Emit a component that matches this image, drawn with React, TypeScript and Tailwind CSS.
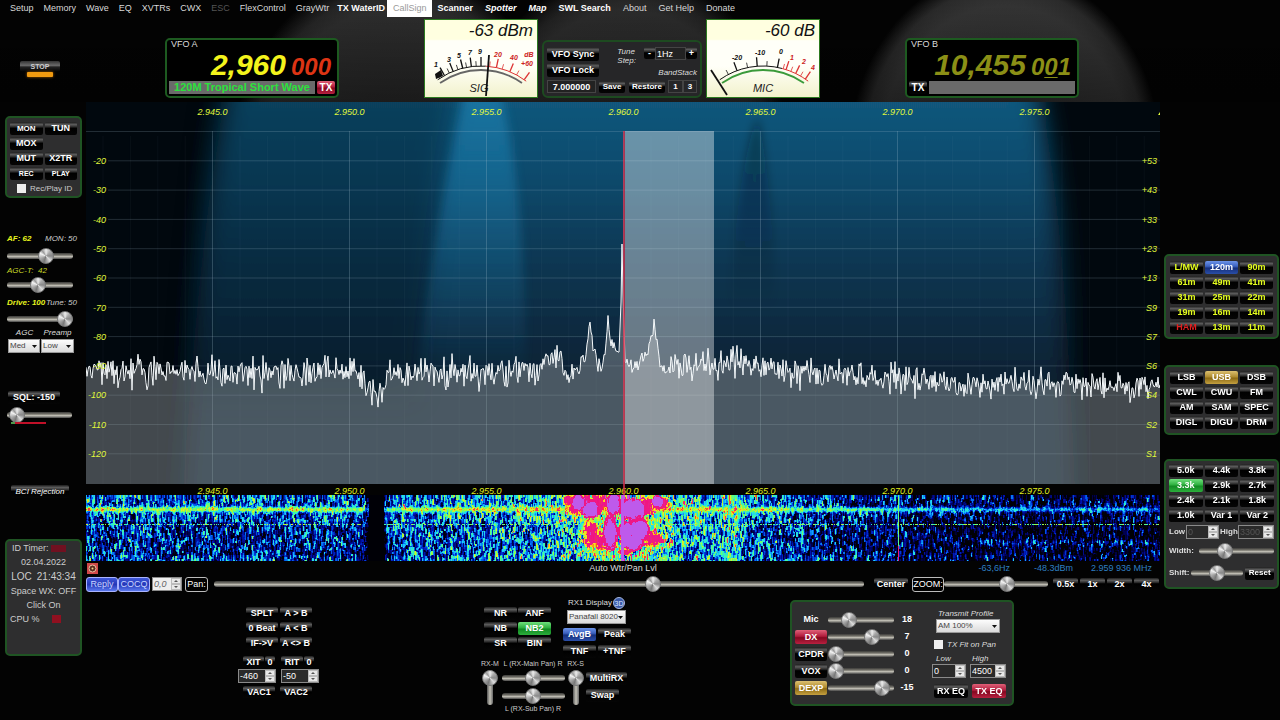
import { useLayoutEffect, useRef, type ReactNode } from "react";

const W = 1074;

function makeRandom(seed: number) {
  let s = seed;
  return () => {
    s = (s * 1664525 + 1013904223) % 4294967296;
    return s / 4294967296;
  };
}

function interpolate(points: number[][], x: number) {
  for (let i = 1; i < points.length; i++) {
    if (x <= points[i][0]) {
      const [x0, y0] = points[i - 1];
      const [x1, y1] = points[i];
      return y0 + ((y1 - y0) * (x - x0)) / (x1 - x0);
    }
  }
  return points[points.length - 1][1];
}

/* ---------- small controls ---------- */

const tones = {
  dark: "bg-[linear-gradient(#1c1c1c,#5c5c5c_20%,#2a2a2a_38%,#000_48%,#050505)] text-white",
  blue: "bg-[linear-gradient(#6d94e8,#3c62c0_40%,#16307c_55%,#2a4ea8)] text-white",
  green: "bg-[linear-gradient(#6fe07c,#2fb040_45%,#128a22_55%,#2cae3c)] text-white",
  gold: "bg-[linear-gradient(#dcc070,#b08c30_45%,#8c6a14_55%,#c4a040)] text-white",
  red: "bg-[linear-gradient(#e06078,#b01c3c_45%,#840820_55%,#b82040)] text-white",
  band: "bg-[linear-gradient(#1c1c1c,#5c5c5c_20%,#2a2a2a_38%,#000_48%,#050505)] text-[#e6ff1e]",
  ham: "bg-[linear-gradient(#1c1c1c,#5c5c5c_20%,#2a2a2a_38%,#000_48%,#050505)] text-[#e02020]",
};
type Tone = keyof typeof tones;

function Btn({ children, tone = "dark", className = "h-[13px]", size = "text-[9px] font-bold" }: { children: ReactNode; tone?: Tone; className?: string; size?: string }) {
  return (
    <button type="button" className={`flex items-center justify-center rounded-[2px] whitespace-nowrap leading-none ${size} ${tones[tone]} ${className}`}>
      {children}
    </button>
  );
}

function Slider({ label, value, className = "w-16", vertical = false }: { label: string; value: number; className?: string; vertical?: boolean }) {
  const track = vertical
    ? "w-4 [writing-mode:vertical-lr] [direction:rtl] [&::-webkit-slider-runnable-track]:w-[6px] [&::-webkit-slider-runnable-track]:bg-[linear-gradient(to_right,#555,#c4c2b8,#666)] [&::-webkit-slider-thumb]:-ml-[5px]"
    : "h-4 [&::-webkit-slider-runnable-track]:h-[6px] [&::-webkit-slider-runnable-track]:bg-[linear-gradient(#3a3a38,#76746c_35%,#c2c0b6_60%,#444)] [&::-webkit-slider-thumb]:-mt-[5px]";
  return (
    <input
      type="range"
      aria-label={label}
      defaultValue={value}
      className={`block shrink-0 appearance-none bg-transparent [&::-webkit-slider-runnable-track]:rounded-[3px] [&::-webkit-slider-thumb]:h-4 [&::-webkit-slider-thumb]:w-4 [&::-webkit-slider-thumb]:appearance-none [&::-webkit-slider-thumb]:rounded-full [&::-webkit-slider-thumb]:border [&::-webkit-slider-thumb]:border-[#777] [&::-webkit-slider-thumb]:bg-[conic-gradient(#eee,#aaa_12%,#888_25%,#ddd_38%,#777_55%,#a8a8a8_68%,#f4f4f4_82%,#999_90%,#eee)] ${track} ${className}`}
    />
  );
}

function Drop({ label, value, className }: { label: string; value: string; className: string }) {
  return (
    <span className={`grid items-center bg-[linear-gradient(#fff,#d8d8d8)] ${className}`}>
      <select aria-label={label} className="col-start-1 row-start-1 h-[14px] w-full appearance-none border border-[#999] pl-px text-[8px] leading-none text-[#444] not-italic">
        <option>{value}</option>
      </select>
      <svg className="pointer-events-none col-start-1 row-start-1 mr-[3px] h-[3px] w-[5px] justify-self-end" viewBox="0 0 5 3">
        <path d="M0 0h5L2.500 3z" fill="#111" />
      </svg>
    </span>
  );
}

function Spin({ label, value, className, light = false, dim = false }: { label: string; value: string; className: string; light?: boolean; dim?: boolean }) {
  return (
    <span className={`flex h-[14px] border border-[#8a8a8a] ${light ? "bg-[#eee]" : "bg-[#2a2a2a]"} ${className}`}>
      <input aria-label={label} defaultValue={value} className={`w-0 min-w-0 flex-1 bg-transparent pl-px text-[9px] leading-none ${light ? "text-[#666] italic" : dim ? "text-[#555]" : "text-white not-italic"}`} />
      <span className="flex w-[10px] flex-col bg-[#e8e8e8]">
        {["up", "down"].map((d) => (
          <button key={d} type="button" aria-label={`${label} ${d}`} className="flex flex-1 items-center justify-center border border-[#bbb]">
            <svg viewBox="0 0 4 2" className="h-[2px] w-[4px]">
              <path d={d === "up" ? "M0 2h4L2 0z" : "M0 0h4L2 2z"} fill="#555" />
            </svg>
          </button>
        ))}
      </span>
    </span>
  );
}

const panel = "rounded-[5px] border-2 border-[#1f5423] bg-[#2e2e2f]";

/* ---------- header ---------- */

const plain = "px-[5px] text-[#d8d8d8]";
const strong = "px-[5px] font-bold text-white";
const menu: [string, string][] = [
  ["Setup", plain], ["Memory", plain], ["Wave", plain], ["EQ", plain], ["XVTRs", plain], ["CWX", plain], ["ESC", "px-[5px] text-[#555]"],
  ["FlexControl", plain], ["GrayWtr", plain], ["TX WaterID", "pl-[3px] pr-[2px] font-bold text-white"], ["CallSign", "bg-white px-[6px] text-[#999]"],
  ["Scanner", strong], ["Spotter", "pl-[7px] pr-[6px] font-bold italic text-white"], ["Map", "px-[6px] font-bold italic text-white"],
  ["SWL Search", "px-[6px] font-bold text-white"], ["About", "px-[6px] text-[#d8d8d8]"], ["Get Help", "px-[6px] text-[#d8d8d8]"], ["Donate", "px-[6px] text-[#d8d8d8]"],
];

function Vfo({ name, main, sub, active }: { name: string; main: string; sub: string; active: boolean }) {
  const tx = (
    <Btn tone={active ? "red" : "dark"} className="h-[13px] w-[18px] shrink-0" size="text-[10px] font-bold">
      TX
    </Btn>
  );
  return (
    <section className="flex h-[60px] w-[174px] flex-col rounded-[5px] border-2 border-[#1d5a20] bg-black px-[2px]">
      <h2 className="pl-[2px] text-[9px] leading-[8px] text-[#ddd]">{name}</h2>
      <div className={`flex h-[33px] items-baseline justify-end gap-[5px] pr-[4px] font-bold italic leading-[34px] ${active ? "text-[#f4f41c]" : "text-[#8b8f16]"}`}>
        <span className="text-[30px]">{main}</span>
        <span className={`text-[24px] ${active ? "text-[#dd3414]" : ""}`}>
          {active ? sub : (
            <>
              0<u className="decoration-1 underline-offset-2">0</u>1
            </>
          )}
        </span>
      </div>
      <div className="flex items-center gap-[2px]">
        {!active && tx}
        <span className="flex h-[13px] flex-1 items-center justify-center bg-[#6a6a6a] text-[11px] font-bold leading-none whitespace-nowrap text-[#2be23c]">
          {active ? "120M Tropical Short Wave" : ""}
        </span>
        {active && tx}
      </div>
    </section>
  );
}

const onDial = (x: number, r: number) => {
  const a = Math.asin((x - 57) / 78);
  return [57 + r * Math.sin(a), 122 - r * Math.cos(a)];
};
const arc = (xa: number, xb: number, r: number) => {
  const [x0, y0] = onDial(xa, r);
  const [x1, y1] = onDial(xb, r);
  return `M${x0} ${y0}A${r} ${r} 0 0 1 ${x1} ${y1}`;
};

function Meter({ value, name, split, needle, major, minor, labels, under }: { value: string; name: string; split: number; needle: number[]; major: number[]; minor: number[]; labels: [string, number, number][]; under: string }) {
  const tick = (x: number, length: number) => {
    const [x0, y0] = onDial(x, 75);
    const [x1, y1] = onDial(x, 75 + length);
    return <line key={x} x1={x0} y1={y0} x2={x1} y2={y1} stroke={x > split ? "#d33" : "#111"} strokeWidth={length > 6 ? 1.3 : 0.8} />;
  };
  return (
    <section className="h-[79px] w-[114px] border border-[#2c7a20] bg-[linear-gradient(#ffffe0_25%,#fffff8_27%,#fffff8_60%,#f2f2cc)]">
      <svg viewBox="1 1 112 77" className="block h-full w-full font-['Liberation_Sans',Arial,sans-serif] italic">
        <text x="109" y="17" textAnchor="end" fontSize="17" fill="#111">{value}</text>
        <path d={arc(12, split, 75)} fill="none" stroke="#111" strokeWidth="1" />
        <path d={arc(split, 104, 75)} fill="none" stroke="#d33" strokeWidth="1" />
        <path d={arc(12, 102, 71)} fill="none" stroke={under} strokeWidth="1.800" />
        {major.map((x) => tick(x, 9))}
        {minor.map((x) => tick(x, 5))}
        {labels.map(([t, x, y]) => (
          <text key={t} x={x} y={y} textAnchor="middle" fontSize="7" fontWeight="bold" fill={x > split + 3 ? "#c22" : "#111"}>{t}</text>
        ))}
        {name === "SIG" && <path d="M12 60l7-3-2-6-6 4z" fill="#111" />}
        <text x={name === "SIG" ? 55 : 57} y="73" textAnchor="middle" fontSize="11" fill="#222">{name}</text>
        <line x1={needle[0]} y1={needle[1]} x2={needle[2]} y2={needle[3]} stroke="#111" strokeWidth="1.800" />
      </svg>
    </section>
  );
}

function SyncPanel() {
  return (
    <section className="flex h-[58px] w-[160px] flex-col rounded-[6px] border-2 border-[#1d4a20] bg-[#262628] px-[3px] pt-[5px]">
      <div className="flex justify-between">
        <div className="flex flex-col gap-[2px]">
          <Btn className="h-[14px] w-[52px]">VFO Sync</Btn>
          <Btn className="h-[14px] w-[52px]">VFO Lock</Btn>
        </div>
        <div className="flex flex-col items-end gap-[2px]">
          <div className="flex items-start">
            <label htmlFor="step" className="mr-[8px] text-[8px] italic leading-[9px] text-[#ddd]">Tune<br />Step:</label>
            <Btn className="h-[12px] w-[11px]">-</Btn>
            <input id="step" defaultValue="1Hz" className="h-[13px] w-[31px] border border-[#444] bg-[#222] pl-px text-[9px] leading-none text-white" />
            <Btn className="h-[12px] w-[11px]">+</Btn>
          </div>
          <span className="text-[8px] italic leading-[12px] text-[#ddd]">BandStack</span>
        </div>
      </div>
      <div className="mt-px flex items-center">
        <input aria-label="Stored frequency" defaultValue="7.000000" className="h-[13px] w-[49px] border border-[#444] bg-[#222] text-center text-[9px] font-bold leading-none text-white" />
        <Btn className="ml-[3px] h-[12px] w-[26px]" size="text-[8px] font-bold">Save</Btn>
        <Btn className="ml-[4px] h-[12px] w-[36px]" size="text-[8px] font-bold">Restore</Btn>
        <span className="ml-auto flex h-[13px] w-[15px] items-center justify-center border border-[#444] text-[8px] font-bold text-white">1</span>
        <span className="flex h-[13px] w-[14px] items-center justify-center border border-[#444] text-[8px] font-bold text-white">3</span>
      </div>
    </section>
  );
}

function Header() {
  return (
    <header className="bg-[linear-gradient(rgba(0,0,0,0),rgba(0,0,0,0.35)_100px),radial-gradient(ellipse_155px_180px_at_78.500%_150px,#2a2a2a,#343434_80%,#2a2a2a_90%,transparent),radial-gradient(ellipse_165px_200px_at_49%_170px,#262626,#2c2c2c_80%,#222_88%,transparent),radial-gradient(ellipse_165px_190px_at_31%_160px,#262626,#2e2e2e_80%,#262626_88%,transparent)]">
      <nav className="flex h-[18px] items-start pl-[5px]">
        {menu.map(([t, c]) => (
          <a key={t} href="#" className={`text-[9px] leading-[17px] whitespace-nowrap ${c}`}>{t}</a>
        ))}
      </nav>
      <div className="flex h-[84px] items-end pb-[4px]">
        <div className="flex w-[86px] shrink-0 pb-[21px] pl-[20px]">
          <button type="button" className="flex w-[40px] flex-col items-center text-[7px] leading-[11px] font-bold text-[#ccc]">
            <span className="w-full rounded-[2px] bg-[linear-gradient(#333,#6a6a6a_40%,#222_55%,#000)]">STOP</span>
            <span className="h-[5px] w-[26px] rounded-[1px] bg-[#f09a10] shadow-[0_0_3px_#a86000]" />
          </button>
        </div>
        <div className="flex flex-1 items-end justify-between pr-[81px] pl-[79px]">
          <Vfo name="VFO A" main="2,960" sub="000" active />
          <div className="flex items-end gap-[4px]">
            <Meter value="-63 dBm" name="SIG" split={62} under="#666" needle={[65, 36, 62, 77]}
              major={[19, 28, 38, 47, 57, 73, 87, 102]} minor={[14, 24, 33, 42, 52, 66, 79, 94]}
              labels={[["1", 12, 48], ["3", 25, 43], ["5", 35, 39], ["7", 46, 36], ["9", 56, 35], ["20", 74, 38], ["40", 90, 41], ["dB", 105, 38], ["+60", 103, 47]]} />
            <SyncPanel />
            <Meter value="-60 dB" name="MIC" split={77} under="#3a9a3a" needle={[5, 51, 21, 76]}
              major={[30, 51, 72, 81, 91, 101]} minor={[21, 41, 61, 78, 86, 96]}
              labels={[["-20", 31, 41], ["-10", 54, 36], ["0", 75, 35], ["1", 86, 41], ["2", 98, 45], ["4", 107, 51]]} />
          </div>
          <Vfo name="VFO B" main="10,455" sub="001" active={false} />
        </div>
        <div className="w-[120px] shrink-0" />
      </div>
    </header>
  );
}

/* ---------- spectrum ---------- */

const freqs = ["2.945.0", "2.950.0", "2.955.0", "2.960.0", "2.965.0", "2.970.0", "2.975.0"];
const freqX = (i: number) => 126.5 + i * 137;
const levelsLeft = ["-20", "-30", "-40", "-50", "-60", "-70", "-80", "-90", "-100", "-110", "-120"];
const levelsRight = ["+53", "+43", "+33", "+23", "+13", "S9", "S7", "S6", "S4", "S2", "S1"];

const envelope = [
  [0, 270], [262, 269], [274, 272], [282, 284], [290, 293], [295, 290], [301, 274], [320, 272], [424, 269], [450, 264], [471, 252], [474, 254], [478, 275], [490, 263],
  [499, 256], [502, 232], [504, 226], [506, 240], [511, 262], [514, 268], [519, 250], [522, 220], [525, 240], [530, 252], [533, 250], [535, 200], [536, 142], [537, 190], [539, 256], [545, 268], [555, 256], [563, 248], [568, 223],
  [571, 236], [574, 262], [580, 268], [600, 263], [640, 260], [680, 266], [700, 270], [820, 277], [900, 282], [1074, 284],
];

function spectrumPoints() {
  const r = makeRandom(23);
  const pts: string[] = [];
  for (let x = 0; x <= W; x += 1) {
    const peak = x > 532 && x < 539;
    const busy = x > 495 && x < 580;
    const n = (r() + r() + r() - 1.5) * (busy ? 8 : 15);
    const dip = !busy && r() > 0.99 ? 9 : 0;
    pts.push(`${x} ${(interpolate(envelope, x) + (peak ? 0 : n + dip)).toFixed(1)}`);
  }
  return pts.join("L");
}
const trace = spectrumPoints();

function Spectrum() {
  return (
    <svg viewBox="0 0 1074 382" className="block w-full bg-[#01080e] text-[9px] italic" role="img" aria-label="Spectrum">
      <defs>
        <linearGradient id="sky" x1="0" y1="0" x2="0" y2="1">
          <stop offset="0" stopColor="#135d84" />
          <stop offset="0.250" stopColor="#0f4a6c" />
          <stop offset="0.450" stopColor="#0a3550" />
          <stop offset="0.700" stopColor="#072031" />
          <stop offset="1" stopColor="#0a2230" />
        </linearGradient>
        <linearGradient id="beam" x1="0" y1="0" x2="0" y2="1">
          <stop offset="0" stopColor="#1d80b0" />
          <stop offset="1" stopColor="#1d80b0" stopOpacity="0" />
        </linearGradient>
        <linearGradient id="shade" x1="0" y1="0" x2="0" y2="1">
          <stop offset="0" stopColor="#021420" stopOpacity="0.400" />
          <stop offset="0.800" stopColor="#021420" stopOpacity="0" />
        </linearGradient>
        <filter id="soft" x="-20%" y="-20%" width="140%" height="140%"><feGaussianBlur stdDeviation="12" /></filter>
        <filter id="soft2" x="-100%" y="-20%" width="300%" height="140%"><feGaussianBlur stdDeviation="5" /></filter>
      </defs>
      <path d="M150-40Q115 80 95 420H990Q980 80 945-40z" fill="url(#sky)" filter="url(#soft)" />
      <path d="M130-20Q110 100 100 300H330Q345 100 370-20z" fill="#021420" opacity="0.350" filter="url(#soft)" />
      <path d="M378-10Q350 120 330 280H440Q440 100 415-10z" fill="url(#beam)" opacity="0.700" filter="url(#soft2)" />
      <path d="M672 15Q650 60 640 260H690Q690 100 672 15z" fill="url(#shade)" filter="url(#soft2)" />
      {Array.from({ length: 40 }, (_, i) => (
        <line key={i} x1={17 + i * 27.4} x2={17 + i * 27.4} y1="34" y2="382" stroke="#9ab" strokeOpacity="0.050" />
      ))}
      {freqs.map((_, i) => (
        <line key={i} x1={freqX(i)} x2={freqX(i)} y1="29" y2="382" stroke="#a8c4d0" strokeOpacity="0.220" />
      ))}
      {Array.from({ length: 12 }, (_, i) => (
        <line key={i} x1={i ? 22 : 0} x2={W} y1={29.5 + i * 29.3} y2={29.5 + i * 29.3} stroke="#a8c4d0" strokeOpacity="0.200" />
      ))}
      <path d={`M0 382L${trace}L${W} 382z`} fill="#a0a4a8" fillOpacity="0.420" />
      <rect x="539" y="29" width="89" height="353" fill="#fff" fillOpacity="0.380" />
      <path d={`M${trace}`} fill="none" stroke="#f6fafc" strokeWidth="1" />
      <line x1="538" x2="538" y1="29" y2="382" stroke="#d8304c" strokeWidth="1.500" />
      <g fill="#e0f83c">
        {freqs.map((f, i) => (
          <text key={f} x={freqX(i)} y="13" textAnchor="middle">{f}</text>
        ))}
        {levelsLeft.map((l, i) => (
          <text key={l} x="20" y={62 + i * 29.3} textAnchor="end">{l}</text>
        ))}
        {levelsRight.map((l, i) => (
          <text key={l} x="1071" y={62 + i * 29.3} textAnchor="end">{l}</text>
        ))}
        <path d="M1072 13l2-3v3z" />
      </g>
    </svg>
  );
}

/* ---------- waterfall ---------- */

const heat = [
  [0, 0, 0, 6], [0.15, 0, 0, 80], [0.3, 0, 20, 180], [0.4, 0, 100, 240], [0.5, 30, 210, 250], [0.6, 60, 250, 170],
  [0.72, 160, 250, 60], [0.82, 250, 230, 30], [0.88, 250, 80, 30], [0.93, 240, 20, 130], [0.99, 235, 30, 140], [1.04, 190, 90, 235], [1.2, 190, 90, 235],
];
const strength = [
  [0, 0.34], [275, 0.32], [280, 0.1], [284, -0.1], [296, -0.1], [300, 0.2], [310, 0.36], [400, 0.4], [450, 0.46], [480, 0.54], [505, 0.64], [570, 0.62], [590, 0.5],
  [630, 0.48], [648, 0.58], [660, 0.4], [740, 0.28], [820, 0.18], [950, 0.1], [1074, 0.1],
];
const blobs = [
  [492, 7, 6, 7], [504, 14, 8, 7], [527, 8, 6, 9], [547, 14, 11, 9], [524, 38, 6, 14], [540, 36, 7, 8], [553, 35, 9, 9], [546, 46, 10, 7], [571, 6, 5, 5],
];
const fringes = [
  [484, 5, 6, 5], [498, 10, 14, 9], [512, 8, 8, 8], [505, 38, 8, 12], [514, 46, 9, 7], [560, 10, 8, 8], [574, 8, 8, 6], [566, 44, 10, 6], [538, 56, 6, 3],
];

function heatAt(v: number) {
  for (let i = 1; i < heat.length; i++) {
    if (v <= heat[i][0]) {
      const a = heat[i - 1];
      const b = heat[i];
      const t = Math.max(0, (v - a[0]) / (b[0] - a[0]));
      return [1, 2, 3].map((k) => a[k] + (b[k] - a[k]) * t);
    }
  }
  return heat[heat.length - 1].slice(1);
}

function Waterfall() {
  const ref = useRef<HTMLCanvasElement>(null);
  useLayoutEffect(() => {
    const ctx = ref.current?.getContext("2d");
    if (!ctx) return;
    const h = 66;
    const img = ctx.createImageData(W, h);
    const r = makeRandom(7);
    const coarse = Array.from({ length: 400 * 24 }, () => r() - 0.5);
    const previous = new Array(h).fill(0);
    for (let x = 0; x < W; x++) {
      const base = interpolate(strength, x);
      let n = 0;
      let run = 0;
      for (let y = 0; y < h; y++) {
        if (run-- <= 0) {
          n = (r() + r() - 1) * 0.5;
          run = 1 + Math.floor(r() * 5);
        }
        const mixed = n * 0.75 + previous[y] * 0.4;
        previous[y] = n;
        const patch = coarse[Math.floor(x / 3) * 24 + Math.floor(y / 4)];
        let v = base + mixed + patch * 0.14;
        if (base < 0) v = -0.1;
        else {
          const band = Math.exp(-((y - 14) ** 2) / 7);
          v = v * (1 - band * 0.75) + band * (Math.min(0.74, base + 0.38) * 0.75 + r() * 0.16 + patch * 0.16);
          if (y < 26 && x < 660) v += 0.03;
          if (y > 26 && y < 60) v -= x > 660 || x < 300 ? 0.06 : 0.03;
          if (x > 890) v += Math.exp(-((y - 47) ** 2) / 8) * 0.18;
          if (y === 29 && base > 0.05) v = r() > 0.4 ? 0.5 + r() * 0.3 : v;
          for (const [bx, by, rx, ry] of fringes) {
            const d = ((x - bx) / rx) ** 2 + ((y - by) / ry) ** 2 + patch * 1.2 + n;
            if (d < 0.9) v = Math.max(v, 0.95 + n * 0.1);
            else if (d < 1.5) v = Math.max(v, 0.82 + n * 0.15);
          }
          for (const [bx, by, rx, ry] of blobs) {
            const d = ((x - bx) / rx) ** 2 + ((y - by) / ry) ** 2 + patch * 0.7 + n * 0.4;
            if (d < 1) v = Math.max(v, 1.1);
            else if (d < 1.7) v = Math.max(v, 0.95);
          }
          if (Math.abs(x - 536) < 2) v = 1.1;
          if (x === 812) v = y > 50 ? 0.95 : 0.6 + r() * 0.15;
        }
        const [cr, cg, cb] = heatAt(v);
        const i = (y * W + x) * 4;
        img.data[i] = cr;
        img.data[i + 1] = cg;
        img.data[i + 2] = cb;
        img.data[i + 3] = 255;
      }
    }
    ctx.putImageData(img, 0, 0);
  }, []);
  return (
    <div>
      <svg viewBox="0 0 1074 11" className="block w-full overflow-visible text-[9px] italic">
        {freqs.map((f, i) => (
          <text key={f} x={freqX(i)} y="10" textAnchor="middle" fill="#e0f020">{f}</text>
        ))}
        <path d="M538 0v11" stroke="#d8304c" strokeWidth="1.500" />
      </svg>
      <canvas ref={ref} width={W} height={66} className="block h-[66px] w-full" />
    </div>
  );
}

/* ---------- under the waterfall ---------- */

function StatusRow() {
  return (
    <div className="grid h-[14px] grid-cols-3 items-center text-[9px] leading-none">
      <svg viewBox="0 0 11 11" className="ml-px h-[11px] w-[11px]">
        <rect width="11" height="11" fill="#d04848" />
        <circle cx="5.500" cy="5.500" r="3.500" fill="#5a2c20" stroke="#eac0a0" />
        <circle cx="5.500" cy="5.500" r="1" fill="#f0d890" />
      </svg>
      <span className="text-center text-[#ddd]">Auto Wtr/Pan Lvl</span>
      <span className="flex justify-end gap-[24px] pr-[8px] text-[#2e7fc2]">
        <span>-63,6Hz</span>
        <span>-48.3dBm</span>
        <span className="-ml-[6px]">2.959 936 MHz</span>
      </span>
    </div>
  );
}

function ZoomRow() {
  const frame = "h-[15px] flex shrink-0 items-center justify-center rounded-[3px] border border-[#bbb] bg-black text-[9px] leading-none text-white";
  const blue = "h-[15px] w-[32px] shrink-0 rounded-[3px] border border-[#aab4ff] bg-[linear-gradient(#4058d8,#2438b8_50%,#5a78ee)] text-[9px] leading-none text-[#c8d4ff]";
  return (
    <div className="flex h-[18px] items-center">
      <button type="button" className={blue}>Reply</button>
      <button type="button" className={blue}>COCQ</button>
      <Spin label="Offset" value="0,0" light className="ml-[2px] w-[30px] shrink-0" />
      <span className={`ml-[3px] w-[23px] ${frame}`}>Pan:</span>
      <Slider label="Pan" value={68} className="ml-[6px] w-0 min-w-0 flex-1" />
      <Btn className="ml-[10px] h-[12px] w-[34px] shrink-0">Center</Btn>
      <span className={`ml-[4px] w-[32px] ${frame}`}>ZOOM:</span>
      <Slider label="Zoom" value={62} className="w-[104px]" />
      <div className="ml-[5px] flex gap-[2px] pr-px">
        {["0.5x", "1x", "2x", "4x"].map((z) => (
          <Btn key={z} className="h-[12px] w-[25px]">{z}</Btn>
        ))}
      </div>
    </div>
  );
}

function VfoTools() {
  return (
    <section className="mt-[14px] ml-[152px] flex w-[82px] shrink-0 flex-col">
      <div className="grid grid-cols-[32px_32px] gap-x-[2px] gap-y-[2px] pl-[8px]">
        {["SPLT", "A > B", "0 Beat", "A < B", "IF->V", "A <> B"].map((t) => (
          <Btn key={t}>{t}</Btn>
        ))}
      </div>
      <div className="mt-[6px] flex gap-px pl-[5px]">
        <Btn className="h-[12px] w-[21px]">XIT</Btn>
        <Btn className="h-[12px] w-[10px]">0</Btn>
        <Btn className="ml-[5px] h-[12px] w-[22px]">RIT</Btn>
        <Btn className="h-[12px] w-[10px]">0</Btn>
      </div>
      <div className="mt-px flex gap-[5px]">
        <Spin label="XIT" value="-460" className="w-[38px]" />
        <Spin label="RIT" value="-50" className="w-[38px]" />
      </div>
      <div className="mt-[3px] flex gap-[5px] pl-[5px]">
        <Btn className="h-[12px] w-[32px]">VAC1</Btn>
        <Btn className="h-[12px] w-[32px]">VAC2</Btn>
      </div>
    </section>
  );
}

function DspTools() {
  return (
    <section className="mt-[3px] ml-[161px] w-[156px] shrink-0">
      <div className="flex gap-[12px] pl-[3px]">
        <div className="mt-[11px] grid grid-cols-[33px_33px] content-start gap-x-px gap-y-[2px]">
          <Btn>NR</Btn><Btn>ANF</Btn>
          <Btn>NB</Btn><Btn tone="green">NB2</Btn>
          <Btn>SR</Btn><Btn>BIN</Btn>
        </div>
        <div className="flex flex-col">
          <div className="flex h-[14px] items-center gap-px pl-[5px] text-[8px] leading-none whitespace-nowrap text-[#ddd]">
            RX1 Display
            <svg viewBox="0 0 12 12" className="h-[12px] w-[12px] text-[7px]">
              <circle cx="6" cy="6" r="5.500" fill="#3a5aa8" stroke="#a8b8e0" />
              <text x="6" y="8.500" textAnchor="middle" fill="#dde6ff">3D</text>
            </svg>
          </div>
          <Drop label="RX1 Display" value="Panafall 8020" className="ml-[4px] w-[59px]" />
          <div className="mt-[4px] grid grid-cols-[33px_33px] gap-x-[2px] gap-y-[4px]">
            <Btn tone="blue">AvgB</Btn><Btn>Peak</Btn>
            <Btn>TNF</Btn><Btn>+TNF</Btn>
          </div>
        </div>
      </div>
      <div className="mt-px flex text-[7px] leading-[10px] whitespace-nowrap text-[#ccc]">
        <div className="flex w-[18px] flex-col items-center">
          RX-M
          <Slider label="RX-M" value={100} vertical className="mt-px h-[35px]" />
        </div>
        <div className="flex w-[68px] flex-col items-center">
          L (RX-Main Pan) R
          <Slider label="Main pan" value={50} className="mt-px w-[63px]" />
          <Slider label="Sub pan" value={50} className="mt-[2px] w-[63px]" />
          L (RX-Sub Pan) R
        </div>
        <div className="flex w-[17px] flex-col items-center">
          RX-S
          <Slider label="RX-S" value={100} vertical className="mt-px h-[35px]" />
        </div>
        <div className="flex flex-col gap-[4px] pt-[13px] pl-[2px]">
          <Btn className="h-[13px] w-[41px]">MultiRX</Btn>
          <Btn className="h-[13px] w-[33px]">Swap</Btn>
        </div>
      </div>
    </section>
  );
}

const txRows: { name: string; tone?: Tone; value: number; text: string }[] = [
  { name: "Mic", value: 26, text: "18" },
  { name: "DX", tone: "red", value: 71, text: "7" },
  { name: "CPDR", tone: "dark", value: 0, text: "0" },
  { name: "VOX", tone: "dark", value: 0, text: "0" },
  { name: "DEXP", tone: "gold", value: 91, text: "-15" },
];

function Transmit() {
  return (
    <section className={`mt-[7px] ml-[153px] flex h-[106px] w-[224px] shrink-0 gap-[12px] px-[3px] pt-[10px] ${panel}`}>
      <div className="flex flex-col gap-px">
        {txRows.map((r) => (
          <div key={r.name} className="flex h-[16px] items-center text-[9px] font-bold text-white">
            {r.tone ? <Btn tone={r.tone} className="h-[14px] w-[32px]">{r.name}</Btn> : <span className="w-[32px] text-center">{r.name}</span>}
            <Slider label={r.name} value={r.value} className="ml-px w-[66px]" />
            <span className="w-[26px] text-center">{r.text}</span>
          </div>
        ))}
      </div>
      <div className="-mt-[4px] flex flex-col text-[8px] italic leading-[11px] text-[#ddd]">
        <span className="pl-[6px]">Transmit Profile</span>
        <Drop label="Transmit Profile" value="AM 100%" className="ml-[4px] w-[64px]" />
        <label className="mt-[6px] flex items-center gap-[4px] pl-[2px] whitespace-nowrap">
          <input type="checkbox" className="h-[9px] w-[9px] shrink-0 appearance-none bg-[#eee]" />
          TX Fit on Pan
        </label>
        <div className="mt-[3px] flex gap-[4px]">
          <div className="flex w-[34px] flex-col"><span className="pl-[4px]">Low</span><Spin label="TX low" value="0" className="w-[34px]" /></div>
          <div className="flex w-[35px] flex-col"><span className="pl-[2px]">High</span><Spin label="TX high" value="4500" className="w-[36px]" /></div>
        </div>
        <div className="mt-[6px] flex gap-[4px] pl-[2px]">
          <Btn className="h-[14px] w-[34px]" size="text-[9px] font-bold not-italic">RX EQ</Btn>
          <Btn tone="red" className="h-[14px] w-[34px]" size="text-[9px] font-bold not-italic">TX EQ</Btn>
        </div>
      </div>
    </section>
  );
}

/* ---------- side columns ---------- */

function LeftColumn() {
  const caption = "flex justify-between text-[8px] italic leading-[12px] whitespace-nowrap";
  return (
    <aside className="flex w-[86px] shrink-0 flex-col pt-[14px]">
      <section className={`ml-[5px] h-[82px] w-[77px] px-[3px] pt-[4px] ${panel}`}>
        <div className="grid grid-cols-2 gap-[2px]">
          <Btn size="text-[8px] font-bold">MON</Btn>
          <Btn>TUN</Btn>
          <Btn>MOX</Btn>
          <span />
          <Btn>MUT</Btn>
          <Btn>X2TR</Btn>
          <Btn size="text-[7px] font-bold">REC</Btn>
          <Btn size="text-[7px] font-bold">PLAY</Btn>
        </div>
        <label className="mt-[3px] flex items-center gap-[4px] pl-[7px] text-[8px] leading-[11px] whitespace-nowrap text-[#ccc]">
          <input type="checkbox" className="h-[9px] w-[9px] shrink-0 appearance-none bg-[#eee]" />
          Rec/Play ID
        </label>
      </section>
      <div className="mt-[35px] ml-[7px] w-[70px]">
        <div className={`text-[#ccc] ${caption}`}><b className="text-[#e6f41e]">AF: 62</b><span>MON: 50</span></div>
        <Slider label="AF" value={62} className="mt-[3px] w-[66px]" />
        <div className="mt-px text-[8px] leading-[12px] text-[#c8d828] italic">AGC-T:&nbsp; 42</div>
        <Slider label="AGC-T" value={45} className="w-[66px]" />
        <div className={`mt-[4px] text-[#ccc] ${caption}`}><b className="text-[#e6f41e]">Drive: 100</b><span>Tune: 50</span></div>
        <Slider label="Drive" value={100} className="mt-[2px] w-[66px]" />
        <div className="flex text-[8px] italic leading-[12px] text-[#ddd]"><span className="w-[35px] text-center">AGC</span><span className="w-[31px] text-center">Preamp</span></div>
        <div className="flex gap-px pl-px">
          <Drop label="AGC" value="Med" className="w-[32px]" />
          <Drop label="Preamp" value="Low" className="w-[33px]" />
        </div>
        <Btn className="mt-[38px] ml-px h-[13px] w-[52px]">SQL: -150</Btn>
        <Slider label="Squelch" value={4} className="mt-[3px] w-[65px]" />
        <div className="-mt-px ml-[4px] flex h-[2px] w-[35px]"><i className="w-[4px] bg-[#4c9a4c]" /><i className="flex-1 bg-[#c01028]" /></div>
        <Btn className="mt-[61px] ml-[4px] h-[13px] w-[58px]" size="text-[8px] italic">BCI Rejection</Btn>
      </div>
      <section className={`mt-[41px] ml-[5px] flex h-[117px] w-[77px] flex-col text-[9px] leading-[14px] whitespace-nowrap text-[#ccc] ${panel}`}>
        <div className="flex items-center gap-[2px] pl-[5px]">ID Timer: <span className="h-[7px] w-[15px] bg-[#701020]" /></div>
        <div className="text-center">02.04.2022</div>
        <div className="flex h-[15px] items-center justify-center gap-[5px] text-[10px]"><span>LOC</span><span>21:43:34</span></div>
        <div className="text-center">Space WX: OFF</div>
        <div className="text-center">Click On</div>
        <div className="flex items-center gap-[12px] pl-[3px]">CPU % <span className="h-[8px] w-[9px] bg-[#901020]" /></div>
      </section>
    </aside>
  );
}

function ButtonGrid({ items, tone = "dark", active, activeTone }: { items: string[]; tone?: Tone; active: string; activeTone: Tone }) {
  return (
    <div className="grid grid-cols-3 gap-x-[2px] gap-y-[2px]">
      {items.map((t) => (
        <Btn key={t} tone={t === active ? activeTone : t === "HAM" ? "ham" : tone}>{t}</Btn>
      ))}
    </div>
  );
}

function RightColumn() {
  return (
    <aside className="flex w-[120px] shrink-0 flex-col px-[4px] pr-px">
      <section className={`mt-[152px] h-[85px] px-[4px] pt-[5px] ${panel}`}>
        <ButtonGrid tone="band" active="120m" activeTone="blue" items={["L/MW", "120m", "90m", "61m", "49m", "41m", "31m", "25m", "22m", "19m", "16m", "14m", "HAM", "13m", "11m"]} />
      </section>
      <section className={`mt-[26px] h-[70px] px-[4px] pt-[4px] ${panel}`}>
        <ButtonGrid active="USB" activeTone="gold" items={["LSB", "USB", "DSB", "CWL", "CWU", "FM", "AM", "SAM", "SPEC", "DIGL", "DIGU", "DRM"]} />
      </section>
      <section className={`mt-[24px] h-[130px] px-[3px] pt-[3px] ${panel}`}>
        <ButtonGrid active="3.3k" activeTone="green" items={["5.0k", "4.4k", "3.8k", "3.3k", "2.9k", "2.7k", "2.4k", "2.1k", "1.8k", "1.0k", "Var 1", "Var 2"]} />
        <div className="mt-[3px] flex items-center text-[8px] font-bold leading-none text-[#ddd]">
          Low<Spin label="Filter low" value="0" dim className="mr-px ml-px w-[33px] font-normal" />
          High<Spin label="Filter high" value="3300" dim className="ml-auto w-[36px] font-normal" />
        </div>
        <div className="mt-[4px] flex items-center justify-between text-[8px] font-bold leading-none text-[#ddd]">
          Width:<Slider label="Width" value={30} className="w-[75px]" />
        </div>
        <div className="mt-[6px] flex items-center gap-[2px] text-[8px] font-bold leading-none text-[#ddd]">
          Shift:<Slider label="Shift" value={48} className="w-[52px]" />
          <Btn className="ml-auto h-[13px] w-[30px]" size="text-[8px]">Reset</Btn>
        </div>
      </section>
    </aside>
  );
}

export default function App() {
  return (
    <div className="min-h-screen bg-[#030303] font-['Liberation_Sans',Arial,sans-serif] text-white">
      <Header />
      <div className="flex">
        <LeftColumn />
        <main className="min-w-0 flex-1">
          <Spectrum />
          <Waterfall />
          <StatusRow />
          <ZoomRow />
          <div className="flex items-start">
            <VfoTools />
            <DspTools />
            <Transmit />
          </div>
        </main>
        <RightColumn />
      </div>
    </div>
  );
}
